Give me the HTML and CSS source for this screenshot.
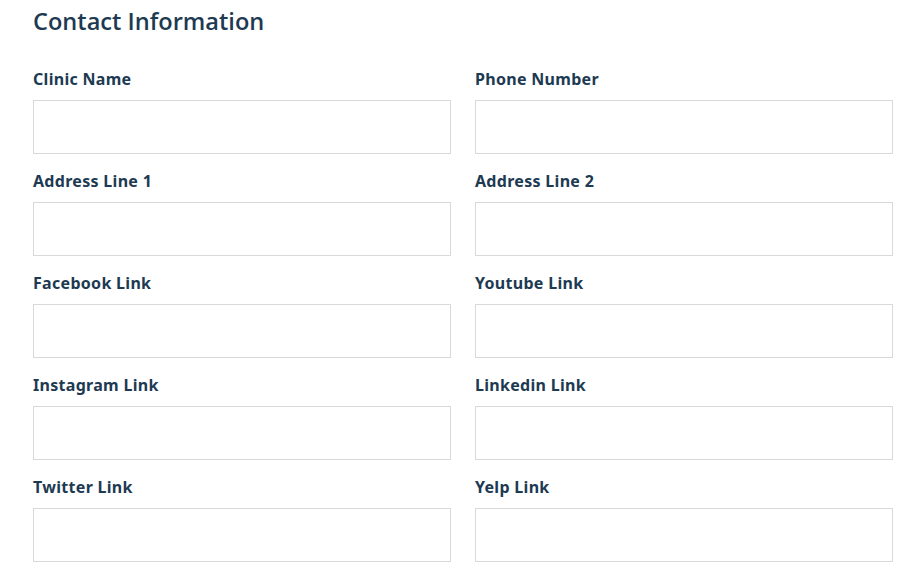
FILE: index.html
```html
<!DOCTYPE html>
<html>
<head>
<meta charset="utf-8">
<link rel="stylesheet" href="styles.css">
</head>
<body>
<section class="contact">
  <h2 class="title">Contact Information</h2>
  <div class="grid">
    <div class="field"><label>Clinic Name</label><input type="text"></div>
    <div class="field"><label>Phone Number</label><input type="text"></div>
    <div class="field"><label>Address Line 1</label><input type="text"></div>
    <div class="field"><label>Address Line 2</label><input type="text"></div>
    <div class="field"><label>Facebook Link</label><input type="text"></div>
    <div class="field"><label>Youtube Link</label><input type="text"></div>
    <div class="field"><label>Instagram Link</label><input type="text"></div>
    <div class="field"><label>Linkedin Link</label><input type="text"></div>
    <div class="field"><label>Twitter Link</label><input type="text"></div>
    <div class="field"><label>Yelp Link</label><input type="text"></div>
  </div>
</section>
</body>
</html>
```
FILE: styles.css
```css
html, body { margin: 0; padding: 0; background: #fff; }
.contact { padding: 6px 29px 0 33px; }
.title {
  margin: 0;
  font-family: "Open Sans", sans-serif;
  font-weight: 600;
  font-size: 23.6px;
  line-height: 30px;
  color: #1d3a52;
}
.grid {
  display: grid;
  grid-template-columns: 418px 418px;
  column-gap: 24px;
  margin-top: 32px;
}
.field { display: flex; flex-direction: column; }
.field label {
  font-family: "Noto Sans", sans-serif;
  font-weight: 700;
  font-size: 16px;
  letter-spacing: 0.3px;
  line-height: 21px;
  color: #1d3a52;
  height: 21px;
  margin-top: 1px;
  margin-bottom: 10px;
}
.field input {
  box-sizing: border-box;
  height: 54px;
  margin: 0 0 16px 0;
  border: 1px solid #d9d9d9;
  border-radius: 0;
  padding: 0 12px;
  background: #fff;
  outline: none;
}
```
